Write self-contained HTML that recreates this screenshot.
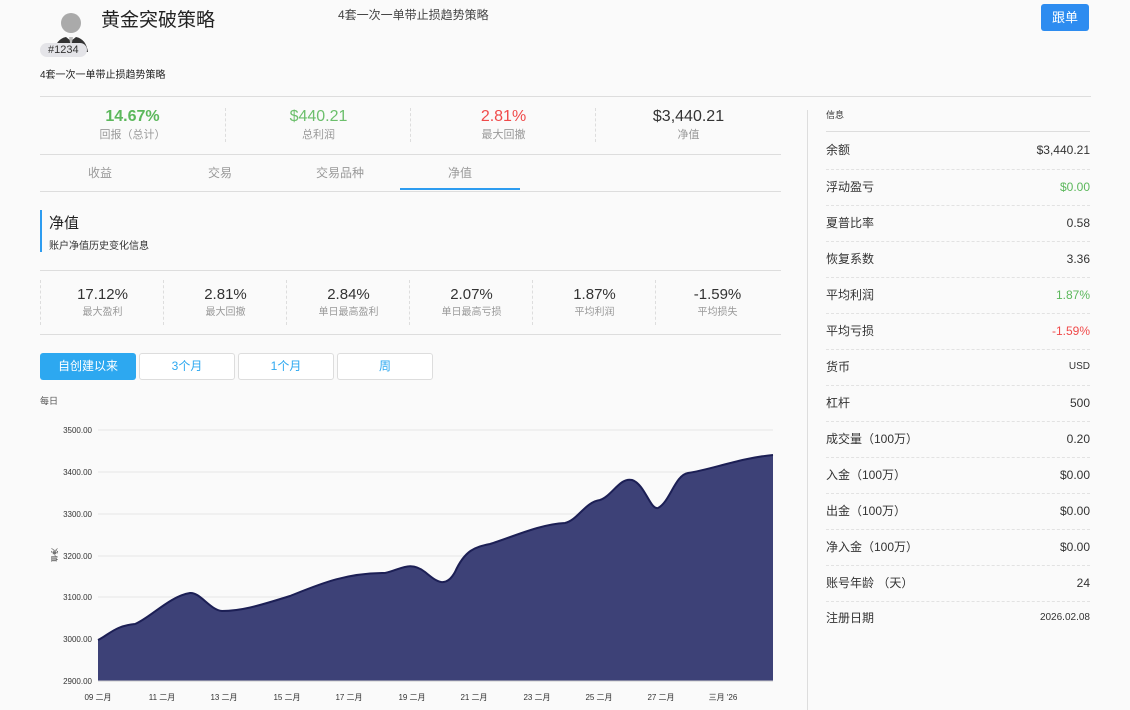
<html><head><style>
body{margin:0;width:1130px;height:709px;background:#fafafa;font-family:"Liberation Sans","Noto Sans CJK SC",sans-serif;position:relative;overflow:hidden;color:#333}
.a{position:absolute}
.c{text-align:center}
.sm{font-size:11px;color:#999}
.row{position:absolute;left:826px;width:264px;height:36px;border-bottom:1px dashed #e2e2e2;font-size:12px;color:#333}
.row span{position:absolute;right:0;top:0}
</style></head><body>
<svg class="a" style="left:52px;top:12px" width="38" height="40" viewBox="0 0 38 40"><circle cx="19" cy="11" r="10" fill="#aaa"/><path d="M2 40 Q4 27 14 25 L19 29 L24 25 Q34 27 36 40Z" fill="#333"/><path d="M17 25 L19 36 L21 25Z" fill="#bbb"/></svg>
<div class="a" style="left:40px;top:43px;background:#e4e4e8;border-radius:8px;padding:1px 8px;font-size:11px;color:#333">#1234</div>
<div class="a" style="left:101px;top:5px;font-size:19px;color:#222">黄金突破策略</div>
<div class="a" style="left:338px;top:6px;font-size:12px;color:#444">4套一次一单带止损趋势策略</div>
<div class="a" style="left:40px;top:66px;font-size:10px;color:#222">4套一次一单带止损趋势策略</div>
<div class="a c" style="left:1041px;top:4px;width:48px;height:27px;line-height:27px;background:#2d8cf0;color:#fff;border-radius:3px;font-size:13px">跟单</div>
<div class="a" style="left:40px;top:96px;width:1051px;border-top:1px solid #ddd"></div>
<div class="a" style="left:807px;top:110px;height:600px;border-left:1px solid #ddd"></div>
<div class="a" style="left:40px;top:104px;width:740px;height:50px">
<div class="a c" style="left:0;width:185px;top:4px"><div style="font-size:16px;color:#5cb85c;font-weight:bold">14.67%</div><div class="sm">回报（总计）</div></div>
<div class="a c" style="left:185px;width:185px;top:4px;border-left:1px dashed #ddd"><div style="font-size:16px;color:#6cbf6c">$440.21</div><div class="sm">总利润</div></div>
<div class="a c" style="left:370px;width:185px;top:4px;border-left:1px dashed #ddd"><div style="font-size:16px;color:#f04a4a">2.81%</div><div class="sm">最大回撤</div></div>
<div class="a c" style="left:555px;width:185px;top:4px;border-left:1px dashed #ddd"><div style="font-size:16px;color:#333">$3,440.21</div><div class="sm">净值</div></div>
</div>
<div class="a" style="left:40px;top:154px;width:741px;border-top:1px solid #ddd"></div>
<div class="a c" style="left:40px;top:164px;width:120px;font-size:12px;color:#999">收益</div>
<div class="a c" style="left:160px;top:164px;width:120px;font-size:12px;color:#999">交易</div>
<div class="a c" style="left:280px;top:164px;width:120px;font-size:12px;color:#999">交易品种</div>
<div class="a c" style="left:400px;top:164px;width:120px;font-size:12px;color:#999">净值</div>
<div class="a" style="left:400px;top:188px;width:120px;height:2px;background:#2d9cf0"></div>
<div class="a" style="left:40px;top:191px;width:741px;border-top:1px solid #ddd"></div>
<div class="a" style="left:40px;top:210px;height:42px;border-left:2px solid #2d9cf0"></div>
<div class="a" style="left:49px;top:212px;font-size:15px;color:#222">净值</div>
<div class="a" style="left:49px;top:237px;font-size:10px;color:#333">账户净值历史变化信息</div>
<div class="a" style="left:40px;top:270px;width:741px;border-top:1px solid #ddd"></div>
<div class="a" style="left:40px;top:334px;width:741px;border-top:1px solid #ddd"></div>
<div class="a" style="left:40px;top:280px;width:741px;height:45px">
<div class="a c" style="left:0;width:123px;border-left:1px dashed #ddd;height:45px"><div style="font-size:15px;margin-top:6px">17.12%</div><div class="sm" style="font-size:10px">最大盈利</div></div>
<div class="a c" style="left:123px;width:123px;border-left:1px dashed #ddd;height:45px"><div style="font-size:15px;margin-top:6px">2.81%</div><div class="sm" style="font-size:10px">最大回撤</div></div>
<div class="a c" style="left:246px;width:123px;border-left:1px dashed #ddd;height:45px"><div style="font-size:15px;margin-top:6px">2.84%</div><div class="sm" style="font-size:10px">单日最高盈利</div></div>
<div class="a c" style="left:369px;width:123px;border-left:1px dashed #ddd;height:45px"><div style="font-size:15px;margin-top:6px">2.07%</div><div class="sm" style="font-size:10px">单日最高亏损</div></div>
<div class="a c" style="left:492px;width:123px;border-left:1px dashed #ddd;height:45px"><div style="font-size:15px;margin-top:6px">1.87%</div><div class="sm" style="font-size:10px">平均利润</div></div>
<div class="a c" style="left:615px;width:123px;border-left:1px dashed #ddd;height:45px"><div style="font-size:15px;margin-top:6px">-1.59%</div><div class="sm" style="font-size:10px">平均损失</div></div>
</div>
<div class="a c" style="left:40px;top:353px;width:96px;height:27px;line-height:27px;background:#2da8f0;color:#fff;border-radius:3px;font-size:12px">自创建以来</div>
<div class="a c" style="left:139px;top:353px;width:94px;height:25px;line-height:25px;border:1px solid #ddd;color:#2da8f0;border-radius:3px;font-size:12px;background:#fff">3个月</div>
<div class="a c" style="left:238px;top:353px;width:94px;height:25px;line-height:25px;border:1px solid #ddd;color:#2da8f0;border-radius:3px;font-size:12px;background:#fff">1个月</div>
<div class="a c" style="left:337px;top:353px;width:94px;height:25px;line-height:25px;border:1px solid #ddd;color:#2da8f0;border-radius:3px;font-size:12px;background:#fff">周</div>
<div class="a" style="left:40px;top:394px;font-size:9px;color:#555">每日</div>
<svg class="a" style="left:0;top:420px" width="790" height="289" font-family="Liberation Sans" font-size="8" fill="#333">
<g stroke="#e6e6e6" stroke-width="1">
<line x1="98" x2="773" y1="10" y2="10"/><line x1="98" x2="773" y1="52" y2="52"/><line x1="98" x2="773" y1="94" y2="94"/><line x1="98" x2="773" y1="136" y2="136"/><line x1="98" x2="773" y1="177" y2="177"/><line x1="98" x2="773" y1="219" y2="219"/></g>
<g text-anchor="end"><text x="92" y="13">3500.00</text><text x="92" y="55">3400.00</text><text x="92" y="97">3300.00</text><text x="92" y="139">3200.00</text><text x="92" y="180">3100.00</text><text x="92" y="222">3000.00</text><text x="92" y="264">2900.00</text></g>
<text x="52" y="135" transform="rotate(90 52 135)" font-size="7" text-anchor="middle">净值</text>
<path d="M98 220 C110 214 115 206 135 204 C150 198 170 176 190 173 C200 172 210 190 222 191 C240 191 255 187 290 176 C320 164 345 153 385 153 C400 150 410 140 425 152 C435 160 445 170 455 152 C465 130 475 127 490 124 C510 118 540 104 565 103 C578 100 585 82 600 80 C612 76 620 57 632 60 C645 64 650 90 658 88 C670 82 675 55 688 53 C710 50 740 38 773 35 L773 261 L98 261Z" fill="#3d4177"/>
<path d="M98 220 C110 214 115 206 135 204 C150 198 170 176 190 173 C200 172 210 190 222 191 C240 191 255 187 290 176 C320 164 345 153 385 153 C400 150 410 140 425 152 C435 160 445 170 455 152 C465 130 475 127 490 124 C510 118 540 104 565 103 C578 100 585 82 600 80 C612 76 620 57 632 60 C645 64 650 90 658 88 C670 82 675 55 688 53 C710 50 740 38 773 35" fill="none" stroke="#1c1f55" stroke-width="2"/>
<line x1="98" x2="773" y1="261" y2="261" stroke="#ccc"/>
<g text-anchor="middle"><text x="98" y="280">09 二月</text><text x="162" y="280">11 二月</text><text x="224" y="280">13 二月</text><text x="287" y="280">15 二月</text><text x="349" y="280">17 二月</text><text x="412" y="280">19 二月</text><text x="474" y="280">21 二月</text><text x="537" y="280">23 二月</text><text x="599" y="280">25 二月</text><text x="661" y="280">27 二月</text><text x="723" y="280">三月 '26</text></g>
</svg>
<div class="a" style="left:826px;top:108px;font-size:9px;color:#333">信息</div>
<div class="a" style="left:826px;top:131px;width:264px;border-top:1px solid #ddd"></div>
<div class="row" style="top:133px;line-height:34px">余额<span>$3,440.21</span></div>
<div class="row" style="top:169px;line-height:36px">浮动盈亏<span style="color:#5cb85c">$0.00</span></div>
<div class="row" style="top:205px;line-height:36px">夏普比率<span>0.58</span></div>
<div class="row" style="top:241px;line-height:36px">恢复系数<span>3.36</span></div>
<div class="row" style="top:277px;line-height:36px">平均利润<span style="color:#5cb85c">1.87%</span></div>
<div class="row" style="top:313px;line-height:36px">平均亏损<span style="color:#f04a4a">-1.59%</span></div>
<div class="row" style="top:349px;line-height:36px">货币<span style="font-size:10px;line-height:36px">USD</span></div>
<div class="row" style="top:385px;line-height:36px">杠杆<span>500</span></div>
<div class="row" style="top:421px;line-height:36px">成交量（100万）<span>0.20</span></div>
<div class="row" style="top:457px;line-height:36px">入金（100万）<span>$0.00</span></div>
<div class="row" style="top:493px;line-height:36px">出金（100万）<span>$0.00</span></div>
<div class="row" style="top:529px;line-height:36px">净入金（100万）<span>$0.00</span></div>
<div class="row" style="top:565px;line-height:36px">账号年龄 （天）<span>24</span></div>
<div class="row" style="top:601px;line-height:34px;border:none">注册日期<span style="font-size:10px;line-height:34px">2026.02.08</span></div>
</body></html>
